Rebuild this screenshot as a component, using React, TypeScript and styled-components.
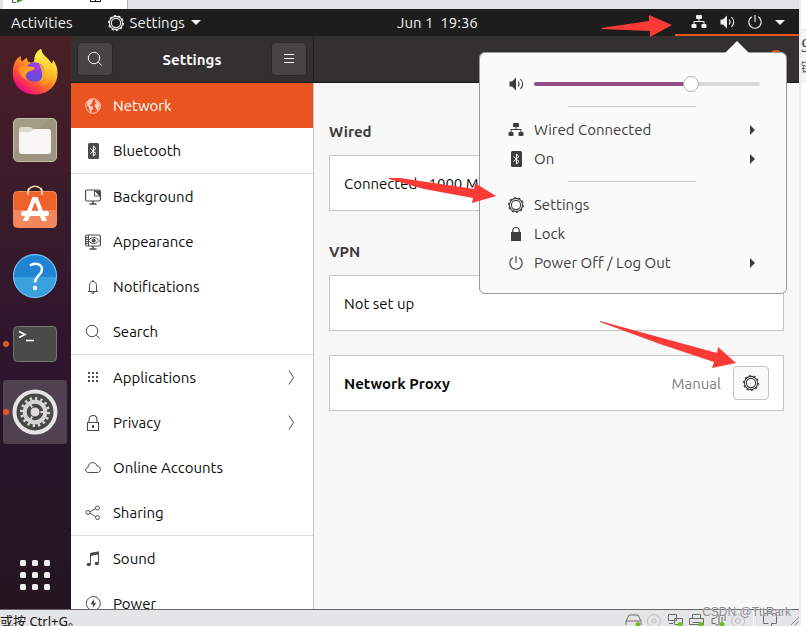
import React from 'react';
import styled, { createGlobalStyle, css } from 'styled-components';

const Global = createGlobalStyle`
  * { box-sizing: border-box; }
  body {
    margin: 0;
    overflow: hidden;
    font-family: Ubuntu, "Noto Sans", "Noto Sans CJK SC", sans-serif;
    font-size: 15px;
  }
  button { font: inherit; color: inherit; border: 0; background: none; padding: 0; cursor: pointer; }
  h1, h2, p, ul { margin: 0; padding: 0; font-size: inherit; }
  ul { list-style: none; }
  svg { display: block; flex: none; }
`;

/* ---------- host window around the virtual machine ---------- */

const Host = styled.div`
  display: flex;
  height: 100vh;
  overflow: hidden;
  background: #fff;
`;

const Machine = styled.div`
  flex: 1;
  min-width: 0;
  display: flex;
  flex-direction: column;
  position: relative;
`;

const HostTabs = styled.div`
  flex: none;
  height: 9px;
  padding-left: 3px;
  background: #e3e4e6;
  overflow: hidden;
`;

const HostTab = styled.div`
  width: 125px;
  height: 9px;
  background: #fff;
  border-right: 1px solid #b4b5b7;
`;

const HostStatus = styled.footer`
  flex: none;
  display: flex;
  align-items: flex-start;
  height: 17px;
  border-top: 1px solid #666;
  background: #e4e5e7;
  color: #111;
  font-size: 13px;
  line-height: 22px;
  overflow: hidden;
`;

const HostHint = styled.span`
  flex: 1;
  font-family: "Noto Sans", "Noto Sans CJK SC", sans-serif;
`;

const Watermark = styled.span`
  position: absolute;
  right: 8px;
  bottom: 5px;
  font: 12px/18px "Liberation Sans", sans-serif;
  color: #8a8a8c;
  text-shadow: 0 0 1px #fff;
`;

const Gutter = styled.aside`
  flex: none;
  width: 7px;
  padding-top: 29px;
  border-left: 2px solid #ededef;
  overflow: hidden;
`;

const GutterNote = styled.div`
  height: 53px;
  padding-top: 4px;
  border-top: 1px solid #e6e6e8;
  border-bottom: 1px solid #e6e6e8;
  background: #f4f4f6;
  color: #3c3c5c;
  white-space: nowrap;
  font: italic 18px/24px "Liberation Serif", serif;
  & > small { display: block; font: 12px/18px "Noto Sans CJK SC", sans-serif; color: #4a5480; }
`;

/* ---------- desktop ---------- */

const Desktop = styled.div`
  flex: 1;
  min-height: 0;
  display: flex;
  flex-direction: column;
  position: relative;
`;

const TopPanel = styled.header`
  flex: none;
  display: grid;
  grid-template-columns: 397fr 402fr;
  height: 27px;
  background: #1d1d1d;
  color: #f2f2f2;
`;

const PanelGroup = styled.div`
  display: flex;
  justify-content: space-between;
`;

const PanelStart = styled.div`
  display: flex;
  align-items: center;
  gap: 35px;
  padding-left: 11px;
`;

const PanelButton = styled.button`
  display: flex;
  align-items: center;
  gap: 6px;
  height: 27px;
`;

const Clock = styled(PanelButton)`
  white-space: pre;
`;

const StatusButton = styled.button`
  display: flex;
  align-items: center;
  gap: 12px;
  width: 124px;
  padding: 1px 15px 0 16px;
  border-bottom: 2px solid #e95420;
`;

const Workspace = styled.div`
  flex: 1;
  min-height: 0;
  display: flex;
`;

const Dock = styled.nav`
  flex: none;
  display: flex;
  flex-direction: column;
  gap: 4px;
  width: 71px;
  padding: 4px 4px 2px 3px;
  background: linear-gradient(#4a1f26, #3a1b2a 30%, #2f162e 52%, #28152a 75%, #24141f);
`;

const DockItem = styled.button<{ $active?: boolean; $last?: boolean }>`
  display: grid;
  place-items: center;
  position: relative;
  height: 64px;
  border-radius: 3px;
  ${p => p.$active && css`background: #514050;`}
  ${p => p.$last && css`margin-top: auto;`}
`;

const RunningDot = styled.i`
  position: absolute;
  left: 0;
  top: 29px;
  width: 6px;
  height: 6px;
  border-radius: 50%;
  background: #e95420;
`;

/* ---------- settings window ---------- */

const Window = styled.main`
  flex: 1;
  min-width: 0;
  display: grid;
  grid-template-columns: 243px 1fr;
  grid-template-rows: 47px 1fr;
  overflow: hidden;
`;

const HeaderBar = styled.div`
  display: flex;
  align-items: center;
  justify-content: space-between;
  padding: 0 7px;
  background: #323030;
  border-bottom: 1px solid #1b1a1a;
  color: #f7f7f7;
  font-weight: 700;
`;

const SidebarHeader = styled(HeaderBar)`
  border-right: 1px solid #232222;
`;

const HeaderButton = styled.button`
  display: grid;
  place-items: center;
  width: 34px;
  height: 32px;
  border-radius: 4px;
  background: #474543;
  box-shadow: 0 0 0 1px #2a2828;
`;

const CloseButton = styled.button`
  width: 18px;
  height: 18px;
  margin-right: 7px;
  border-radius: 50%;
  background: #e95420;
`;

const PageTitle = styled.span`
  flex: 1;
  text-align: center;
`;

const Sidebar = styled.nav`
  min-height: 0;
  overflow: hidden;
  background: #fff;
  border-right: 1px solid #c4c4c4;
`;

const SidebarGroup = styled.ul`
  & + & { border-top: 1px solid #dfdfdf; }
`;

const SidebarLink = styled.a<{ $selected?: boolean }>`
  display: flex;
  align-items: center;
  gap: 12px;
  height: 45px;
  padding: 0 18px 0 14px;
  color: ${p => (p.$selected ? '#fff' : '#0c0c0c')};
  background: ${p => (p.$selected ? '#e95420' : 'transparent')};
  text-decoration: none;
  & > svg { color: ${p => (p.$selected ? '#f9cdbd' : '#4c4c4c')}; }
  & > span { flex: 1; }
`;

const Content = styled.div`
  padding: 37px 15px 0;
  background: #f7f7f7;
`;

const Section = styled.section`
  & + & { margin-top: 29px; }
`;

const SectionTitle = styled.h2`
  margin-bottom: 11px;
  color: #3d3d3d;
  line-height: 24px;
`;

const Card = styled.div`
  display: flex;
  align-items: center;
  gap: 12px;
  height: 56px;
  padding: 0 14px;
  border: 1px solid #c4c4c4;
  background: #fff;
  color: #0c0c0c;
  & > :first-child { flex: 1; }
`;

const ProxyCard = styled(Card)`
  margin-top: 24px;
`;

const Muted = styled.span`
  color: #7c7c7c;
`;

const GearButton = styled.button`
  display: grid;
  place-items: center;
  width: 36px;
  height: 34px;
  border: 1px solid #c4c4c4;
  border-radius: 4px;
  background: #fafafa;
  color: #3d3d3d;
`;

/* ---------- system menu ---------- */

const Popover = styled.div`
  position: absolute;
  top: 43px;
  right: 12px;
  width: 308px;
  padding: 16px 26px 16px 28px;
  border: 1px solid #9a9a9a;
  border-radius: 6px;
  background: #fafafa;
  color: #3d3d3d;
`;

const PopoverTip = styled.svg`
  position: absolute;
  top: -12px;
  right: 37px;
`;

const MenuRow = styled.button`
  display: flex;
  align-items: center;
  gap: 10px;
  width: 100%;
  height: 29px;
  padding-right: 5px;
  text-align: left;
  & > span { flex: 1; }
`;

const VolumeRow = styled.label`
  display: flex;
  align-items: center;
  gap: 10px;
  height: 29px;
`;

const Volume = styled.input`
  flex: 1;
  min-width: 0;
  height: 16px;
  margin: 0;
  appearance: none;
  background: transparent;
  &::-webkit-slider-runnable-track {
    height: 4px;
    border-radius: 2px;
    background: linear-gradient(90deg, #924d8b 70%, #d9d9d9 70%);
  }
  &::-webkit-slider-thumb {
    appearance: none;
    width: 16px;
    height: 16px;
    margin-top: -6px;
    border: 1px solid #b4b4b4;
    border-radius: 50%;
    background: #fff;
  }
`;

const MenuDivider = styled.hr`
  width: 128px;
  height: 1px;
  margin: 8px auto 8px 60px;
  border: 0;
  background: #c9c9c9;
`;

const Annotations = styled.svg`
  position: absolute;
  inset: 0;
  pointer-events: none;
`;

/* ---------- symbolic icons ---------- */

const Sym = ({ children, size = 16 }: { children: React.ReactNode; size?: number }) => (
  <svg width={size} height={size} viewBox="0 0 16 16" fill="none" stroke="currentColor" aria-hidden="true">
    {children}
  </svg>
);

const Gear = () => (
  <Sym>
    <circle cx="8" cy="8" r="6.600" strokeWidth="1.100" />
    <circle cx="8" cy="8" r="7.400" strokeWidth="1.100" pathLength="20" strokeDasharray="1 1" />
    <circle cx="8" cy="8" r="4.600" strokeWidth="1.100" />
  </Sym>
);
const Caret = () => (
  <svg width="10" height="5" viewBox="0 0 10 5" fill="currentColor" aria-hidden="true"><path d="M0 0h10L5 5z" /></svg>
);
const RightCaret = () => (
  <svg width="5" height="10" viewBox="0 0 5 10" fill="currentColor" aria-hidden="true"><path d="M0 0l5 5-5 5z" /></svg>
);
const Wired = () => (
  <Sym>
    <g fill="currentColor" stroke="none">
      <rect x="5" y="1" width="6" height="4" rx="1" />
      <rect x="0.5" y="10" width="5" height="4" rx="1" />
      <rect x="10.5" y="10" width="5" height="4" rx="1" />
    </g>
    <path d="M8 5v2.5M3 10.500V7.500h10v3" />
  </Sym>
);
const Speaker = () => (
  <Sym>
    <path d="M1.500 5.500h2.500L8 1.500v13L4 10.500H1.500z" fill="currentColor" stroke="none" />
    <path d="M10 5.500c1.300 1.500 1.300 3.500 0 5M12.500 3c2.600 3 2.600 7 0 10" strokeWidth="1.100" />
  </Sym>
);
const PowerOff = () => (
  <Sym>
    <path d="M4.800 2.700a6.200 6.200 0 1 0 6.400 0M8 1v7" strokeWidth="1.100" />
  </Sym>
);
const Bluetooth = () => (
  <Sym>
    <rect x="3" y="0" width="11" height="16" rx="1.500" fill="currentColor" stroke="none" />
    <path d="M5.500 5.500l5.500 5L8.400 13V3L11 5.500l-5.500 5" stroke="#fff" />
  </Sym>
);
const Magnifier = () => (
  <Sym>
    <circle cx="7" cy="7" r="5.700" />
    <path d="M11.200 11.200l3.600 3.300" />
  </Sym>
);
const Globe = () => (
  <Sym>
    <circle cx="8" cy="8" r="7.300" />
    <path
      d="M2.500 3.500L5 1.500 8.500 1.500 8 3 6.500 4 7 5.500 5 6.500 5.500 8 8 9 8 11 6.500 12.500 6 14.500 4.500 12.500 4 9.500 2 7.500zM10.500 2l3 2.500L15 7.500 14 9l-.5 2.500-1.500 1.500-1-3L9.500 8.500 9.800 6.500l1.700-.8L10 4z"
      fill="currentColor" stroke="none"
    />
  </Sym>
);
const Background = () => (
  <Sym>
    <rect x="0.600" y="1" width="14.800" height="11" rx="1.500" strokeWidth="1.2" />
    <path d="M8 12v3M4.500 15h7" strokeWidth="1.600" />
    <path d="M9.500 1.500v5.500H15M9.500 1.500L15 7" />
    <path d="M9.500 1.500H15V7z" fill="currentColor" stroke="none" />
  </Sym>
);
const Appearance = () => (
  <Sym>
    <rect x="0.600" y="1" width="14.800" height="11" rx="1.500" strokeWidth="1.200" />
    <path d="M8 12v3M4.500 15h7" strokeWidth="1.600" />
    <path d="M3.500 1v11M1 3.500h2M1 5.500h2M1 7.500h2M1 9.500h2" />
    <path d="M3.500 6.500c3-4 7.500-4 10.500 0-3 4-7.500 4-10.500 0z" />
    <circle cx="8.700" cy="6.500" r="1.600" fill="currentColor" />
  </Sym>
);
const Bell = () => (
  <Sym>
    <path d="M3 12.500h10M4.500 12V6.500C4.500 4 6 2.500 8 2.500s3.500 1.500 3.500 4V12M8 1v1.500" />
    <path d="M6 13.500h4l-1.500 1.500h-1z" fill="currentColor" stroke="none" />
  </Sym>
);
const AppGrid = () => (
  <Sym>
    <g fill="currentColor" stroke="none">
      {[2, 6, 10].flatMap(y => [3, 7, 11].map(x => <rect key={`${x}-${y}`} x={x} y={y} width="2" height="2" />))}
    </g>
  </Sym>
);
const Padlock = () => (
  <Sym>
    <path d="M2.500 7.500h11v8h-11zM4 7.500V5c0-6 8-6 8 0v2.500" strokeWidth="1.100" />
    <rect x="7" y="10" width="2" height="3" fill="currentColor" stroke="none" />
  </Sym>
);
const SolidLock = () => (
  <Sym>
    <rect x="3" y="6" width="10" height="9" fill="currentColor" stroke="none" />
    <path d="M4.800 7V4.500c0-4 6.400-4 6.400 0V7" strokeWidth="1.200" />
  </Sym>
);
const Cloud = () => (
  <Sym>
    <path d="M3.500 12.500C-.3 12.500-.3 7.800 3 7.500c0-6 8-6.500 9-1.500 4.500 0 4.500 6.500 0 6.500z" />
  </Sym>
);
const Share = () => (
  <Sym>
    <circle cx="3" cy="7.500" r="2" />
    <circle cx="12.500" cy="3" r="2" />
    <circle cx="12.500" cy="12.500" r="2" />
    <path d="M5 6.700l1.500-.8 4.200-2.300M5 8.300l1.500.8 4.200 2.500" />
  </Sym>
);
const Note = () => (
  <Sym>
    <path d="M5.500 13.500V2.500l8-1.500v11" />
    <path d="M5.500 2l8-1.500v3l-8 1.500z" fill="currentColor" stroke="none" />
    <ellipse cx="3.800" cy="13.500" rx="2.200" ry="1.800" fill="currentColor" stroke="none" />
    <ellipse cx="11.800" cy="12.500" rx="2.200" ry="1.800" fill="currentColor" stroke="none" />
  </Sym>
);
const Battery = () => (
  <Sym>
    <circle cx="8.300" cy="7.500" r="7" />
    <path d="M9 3L5.500 8.300h2.300V12L11.300 6.800H9z" fill="currentColor" stroke="none" />
  </Sym>
);
const Chevron = () => (
  <svg width="7" height="16" viewBox="0 0 7 16" fill="none" stroke="currentColor" aria-hidden="true"><path d="M1 0.500l4.500 7L1 14.500" /></svg>
);
const Burger = () => (
  <Sym><path d="M3 3.500h10M3 7.500h10M3 11.500h10" /></Sym>
);

/* ---------- dock icons ---------- */

const Firefox = () => (
  <svg width="46" height="46" viewBox="0 0 46 46" aria-hidden="true">
    <defs>
      <linearGradient id="fxBody" x1="0.850" y1="0.150" x2="0.250" y2="0.950">
        <stop offset="0" stopColor="#fff04a" />
        <stop offset="0.300" stopColor="#ffc02c" />
        <stop offset="0.550" stopColor="#ff7a22" />
        <stop offset="0.800" stopColor="#ff3a4c" />
        <stop offset="1" stopColor="#e80a86" />
      </linearGradient>
      <radialGradient id="fxGlobe" cx="0.600" cy="0.200" r="0.900">
        <stop offset="0" stopColor="#b13be6" />
        <stop offset="0.500" stopColor="#7a45e0" />
        <stop offset="1" stopColor="#5a52d8" />
      </radialGradient>
      <linearGradient id="fxFlame" x1="0.500" y1="0" x2="0.500" y2="1">
        <stop offset="0" stopColor="#fff352" />
        <stop offset="0.600" stopColor="#ffc62e" />
        <stop offset="1" stopColor="#ff8a1e" />
      </linearGradient>
      <linearGradient id="fxHead" x1="0" y1="0" x2="1" y2="0.500">
        <stop offset="0" stopColor="#ff8a1c" />
        <stop offset="1" stopColor="#ffb224" />
      </linearGradient>
    </defs>
    <path
      fill="url(#fxBody)"
      d="M9 7c-.6 2.500-.2 4 .8 5.500L15 8.500c-.2 2.500.8 4.500 3 5 2 .4 4-.5 5-2.500C22 6 25 2 29 0c1 5 3.500 6.500 6.500 9.500 2.500 2.500 3.500 4 4.500 5.500l1-4c3 3.500 4.500 8 4.500 13 0 12.500-9.500 21.500-22.500 21.500S.8 36.500.8 24C.8 16 3 10 9 7z"
    />
    <path fill="url(#fxFlame)" d="M29 0c1 5 3.500 6.500 6.500 9.500 5 5 6.500 10 5 16.500-1.500 7-7 11-13 11 5-3 6-8 5-13-1-5-4-8-9.500-8.500C21 8 24 2.500 29 0z" />
    <circle cx="22.700" cy="23" r="9.800" fill="url(#fxGlobe)" />
    <path fill="#ffb52a" d="M27 15c5 2 7 6 6.500 11-1 5-4 7-7 8 3-3 4-6 3.500-10-.3-3.500-1.500-6-3-9z" opacity=".9" />
    <path fill="url(#fxHead)" d="M6 20c2-2.500 5-3 8-3l9 1.500c-.5 2-2.500 3-5 3.500-2 .5-2.500 1.500-4 3-1 2.500-.5 4 1 6-5-2.500-8-6-9-11z" />
  </svg>
);

const Files = () => (
  <svg width="46" height="46" viewBox="0 0 46 46" aria-hidden="true">
    <rect x="1.500" y="1.500" width="43" height="43" rx="4.500" fill="#a39b86" stroke="#c3bdab" />
    <path d="M2 36L38 2h2q4 0 4 4v34q0 4-4 4H6q-4 0-4-4z" fill="#978f7a" opacity=".5" />
    <path d="M7 13q0-3 3-3h9l3 3h13v10H7z" fill="#dcd8cc" />
    <path d="M7 17q0-2 2-2h9.500l3.500-3h14q3 0 3 3v19q0 3-3 3H10q-3 0-3-3z" fill="#f8f7f5" />
  </svg>
);

const Software = () => (
  <svg width="46" height="46" viewBox="0 1 46 46" aria-hidden="true">
    <path d="M16 9c0-9 14-9 14 0" fill="none" stroke="#f2d7a8" strokeWidth="1.500" />
    <rect x="1.500" y="7.500" width="43" height="36" rx="4" fill="#f0622c" stroke="#f58a5c" />
    <path d="M2 26h42v14q0 3-3 3H5q-3 0-3-3z" fill="#f4875c" />
    <path d="M16 11V8c0-2 .5-3 1-4M30 11V8c0-2-.5-3-1-4" stroke="#f8e6c4" strokeWidth="1.500" fill="none" />
    <path fillRule="evenodd" d="M20.500 13h5L35 37h-5l-3-7h-8l-3 7h-5zM23 18l-3.500 9h7z" fill="#fff" />
    <rect x="9" y="27" width="28" height="5" rx="2.500" fill="#fff" />
  </svg>
);

const Help = () => (
  <svg width="46" height="46" viewBox="0 0 46 46" aria-hidden="true">
    <circle cx="23" cy="23" r="22" fill="#3ba0e0" />
    <path d="M1.500 24a21.500 21.500 0 0 1 43 0z" fill="#1f84d4" />
    <circle cx="23" cy="23" r="21.500" fill="none" stroke="#7cc4f0" />
    <path d="M18 12.500c5-3.500 12-1.500 12 4 0 6-7 6-7 13" fill="none" stroke="#fff" strokeWidth="2.500" />
    <circle cx="23" cy="35" r="2.200" fill="#fff" />
  </svg>
);

const Terminal = () => (
  <svg width="46" height="46" viewBox="0 0 46 46" aria-hidden="true">
    <rect x="1.500" y="5.500" width="43" height="35" rx="4" fill="#4b4b4a" stroke="#737372" />
    <path d="M7 10.500l6 3-6 3M14 19.500h8" fill="none" stroke="#fff" strokeWidth="1.600" />
  </svg>
);

const SettingsApp = () => (
  <svg width="46" height="46" viewBox="0 0 46 46" aria-hidden="true">
    <circle cx="23" cy="23" r="20.500" fill="#484846" stroke="#e6e5e3" strokeWidth="4" />
    <circle cx="23" cy="23" r="10.300" fill="none" stroke="#d6d5d2" strokeWidth="4" />
    <circle cx="23" cy="23" r="13.500" fill="none" stroke="#d6d5d2" strokeWidth="3" pathLength="32" strokeDasharray="0.900 1.100" />
    <path d="M23 23h10M23 23l-5.500-9M23 23l-5.500 9" stroke="#d6d5d2" strokeWidth="2" />
    <circle cx="23" cy="23" r="5" fill="#dddcd9" stroke="#484846" />
  </svg>
);

const ShowApps = () => (
  <svg width="30" height="30" viewBox="0 0 30 30" fill="#f0f0f0" aria-hidden="true">
    {[0, 12, 24].flatMap(y => [0, 12, 24].map(x => <rect key={`${x}-${y}`} x={x} y={y} width="6" height="6" rx="1.500" />))}
  </svg>
);

const TabGlyphs = () => (
  <svg width="120" height="9" viewBox="0 0 120 9" fill="none" aria-hidden="true">
    <path d="M13 2.500H9.500V-2" stroke="#555" />
    <path d="M14-2v5l8-4z" fill="#3f9a14" />
    <path d="M87.500-1v2.500h10V-1M92.500-1v2" stroke="#111" />
  </svg>
);

const HostDevices = () => (
  <svg width="174" height="16" viewBox="0 0 174 16" fill="none" stroke="#6c6c6c" aria-hidden="true">
    <path d="M1 15V11l3-6h9l3 6v4M1 11h14" />
    <g stroke="#bdbdbd"><circle cx="29" cy="11" r="6.500" /><circle cx="29" cy="11" r="2" /><circle cx="113" cy="11" r="6.500" /><circle cx="113" cy="11" r="2.500" /></g>
    <path d="M43.500 4.500h8v6h-8zM49.500 8.500h8v6h-8zM44 13.500h4" />
    <path d="M67.500 8.500v-4h8v4M64.500 8.500h14v6h-14zM67.500 12.500h8" />
    <path d="M87 8.500h3l4-4v11M87 8.500v5h3l3 2M97 7v6M100 5v6" />
    <path d="M128.500 2v14" stroke="#fff" />
    <path d="M138.500 3.500h13v10h-5v3M138.500 3.500v10h5" />
    <path d="M166 15l8-8M170 15l4-4" stroke="#8c8c8c" />
    <g fill="#6fbe1e" stroke="none">
      <circle cx="13" cy="14.500" r="2.500" /><circle cx="55" cy="14.500" r="2.500" /><circle cx="76" cy="14.500" r="2.500" /><circle cx="97" cy="14.500" r="2.500" />
    </g>
  </svg>
);

/* ---------- data ---------- */

type Entry = { label: string; icon: () => React.ReactElement; more?: boolean; selected?: boolean };

const groups: Entry[][] = [
  [{ label: 'Network', icon: Globe, selected: true }, { label: 'Bluetooth', icon: Bluetooth }],
  [
    { label: 'Background', icon: Background },
    { label: 'Appearance', icon: Appearance },
    { label: 'Notifications', icon: Bell },
    { label: 'Search', icon: Magnifier },
  ],
  [
    { label: 'Applications', icon: AppGrid, more: true },
    { label: 'Privacy', icon: Padlock, more: true },
    { label: 'Online Accounts', icon: Cloud },
    { label: 'Sharing', icon: Share },
  ],
  [{ label: 'Sound', icon: Note }, { label: 'Power', icon: Battery }],
];

const dock = [
  { label: 'Firefox', icon: Firefox },
  { label: 'Files', icon: Files },
  { label: 'Ubuntu Software', icon: Software },
  { label: 'Help', icon: Help },
  { label: 'Terminal', icon: Terminal, running: true },
  { label: 'Settings', icon: SettingsApp, running: true, active: true },
];

const networkItems: Entry[] = [
  { label: 'Wired Connected', icon: Wired, more: true },
  { label: 'On', icon: Bluetooth, more: true },
];
const sessionItems: Entry[] = [
  { label: 'Settings', icon: Gear },
  { label: 'Lock', icon: SolidLock },
  { label: 'Power Off / Log Out', icon: PowerOff, more: true },
];

const MenuItems = ({ items }: { items: Entry[] }) => (
  <>
    {items.map(({ label, icon: Icon, more }) => (
      <MenuRow key={label}><Icon /><span>{label}</span>{more && <RightCaret />}</MenuRow>
    ))}
  </>
);

export default function App() {
  return (
    <Host>
      <Global />
      <Machine>
        <HostTabs><HostTab><TabGlyphs /></HostTab></HostTabs>
        <Desktop>
          <TopPanel>
            <PanelStart>
              <PanelButton>Activities</PanelButton>
              <PanelButton><Gear />Settings<Caret /></PanelButton>
            </PanelStart>
            <PanelGroup>
              <Clock>{'Jun 1  19:36'}</Clock>
              <StatusButton aria-label="System menu"><Wired /><Speaker /><PowerOff /><Caret /></StatusButton>
            </PanelGroup>
          </TopPanel>
          <Workspace>
            <Dock aria-label="Dock">
              {dock.map(({ label, icon: Icon, running, active }) => (
                <DockItem key={label} aria-label={label} $active={active}>
                  <Icon />
                  {running && <RunningDot />}
                </DockItem>
              ))}
              <DockItem aria-label="Show Applications" $last><ShowApps /></DockItem>
            </Dock>
            <Window>
              <SidebarHeader>
                <HeaderButton aria-label="Search"><Magnifier /></HeaderButton>
                <h1>Settings</h1>
                <HeaderButton aria-label="Menu"><Burger /></HeaderButton>
              </SidebarHeader>
              <HeaderBar>
                <PageTitle>Network</PageTitle>
                <CloseButton aria-label="Close" />
              </HeaderBar>
              <Sidebar aria-label="Settings">
                {groups.map(group => (
                  <SidebarGroup key={group[0].label}>
                    {group.map(({ label, icon: Icon, more, selected }) => (
                      <li key={label}>
                        <SidebarLink href={`#${label}`} $selected={selected}>
                          <Icon /><span>{label}</span>{more && <Chevron />}
                        </SidebarLink>
                      </li>
                    ))}
                  </SidebarGroup>
                ))}
              </Sidebar>
              <Content>
                <Section>
                  <SectionTitle>Wired</SectionTitle>
                  <Card><span>Connected - 1000 Mb/s</span></Card>
                </Section>
                <Section>
                  <SectionTitle>VPN</SectionTitle>
                  <Card><span>Not set up</span></Card>
                </Section>
                <ProxyCard>
                  <strong>Network Proxy</strong>
                  <Muted>Manual</Muted>
                  <GearButton aria-label="Proxy options"><Gear /></GearButton>
                </ProxyCard>
              </Content>
            </Window>
          </Workspace>
          <Popover>
            <PopoverTip width="24" height="12" viewBox="0 0 24 12" fill="#fafafa"><path d="M0 12L12 0l12 12z" /></PopoverTip>
            <VolumeRow>
              <Speaker />
              <Volume type="range" min="0" max="100" defaultValue="71" aria-label="Volume" />
            </VolumeRow>
            <MenuDivider />
            <MenuItems items={networkItems} />
            <MenuDivider />
            <MenuItems items={sessionItems} />
          </Popover>
          <Annotations width="799" height="600" viewBox="0 9 799 600" fill="#fb3a36" aria-hidden="true">
            <path d="M601 28L649 21V15L672 25 650 37V31L602 29z" />
            <path d="M389 178L400 178 474 189 475 183 496 196 472 203 473 198 424 189 389 179z" />
            <path d="M600 321L717 353 718 347 736 363 712 368 714 362 660 344 600 322z" />
          </Annotations>
        </Desktop>
        <HostStatus>
          <HostHint>或按 Ctrl+G。</HostHint>
          <HostDevices />
        </HostStatus>
        <Watermark>CSDN @TttRark</Watermark>
      </Machine>
      <Gutter>
        <GutterNote>9<small>链</small></GutterNote>
      </Gutter>
    </Host>
  );
}
